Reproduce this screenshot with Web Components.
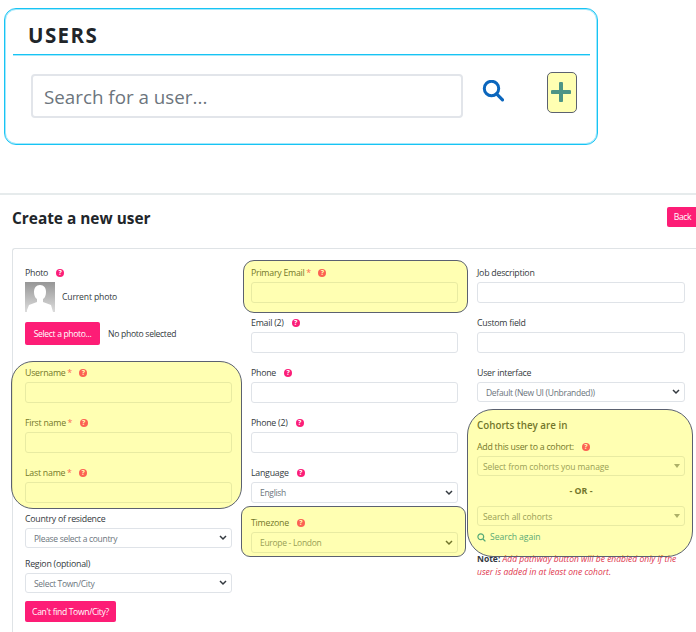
<!DOCTYPE html>
<html>
<head>
<meta charset="utf-8">
<title>Users</title>
<style>
  html, body { margin: 0; height: 632px; overflow: hidden; background: #fff; }
  body { position: relative; width: 696px; font-family: "Open Sans", sans-serif; color: #343a40; }
</style>
</head>
<body>
<users-panel></users-panel>
<create-user></create-user>

<mark-box x="547" y="72" w="30" h="41" r="5"></mark-box>
<mark-box x="243" y="260" w="225" h="53" r="11"></mark-box>
<mark-box x="11" y="361" w="231" h="148" r="22"></mark-box>
<mark-box x="241" y="506" w="225" h="51" r="9"></mark-box>
<mark-box x="467" y="409" w="226" h="148" r="26"></mark-box>

<script>
class MarkBox extends HTMLElement {
  constructor() {
    super();
    const a = (n) => this.getAttribute(n);
    this.attachShadow({ mode: 'open' }).innerHTML = `
      <style>
        :host {
          position: absolute;
          left: ${a('x')}px; top: ${a('y')}px; width: ${a('w')}px; height: ${a('h')}px;
          box-sizing: border-box;
          background: rgba(255, 255, 0, .3);
          border: 1px solid #5b6170;
          border-radius: ${a('r')}px;
          pointer-events: none;
        }
      </style>`;
  }
}

class HelpDot extends HTMLElement {
  constructor() {
    super();
    this.attachShadow({ mode: 'open' }).innerHTML = `
      <style>
        :host {
          display: inline-flex; align-items: center; justify-content: center;
          width: 8px; height: 8px; border-radius: 50%;
          background: #fb1e78; color: #fff;
          font: 700 7px/8px "Open Sans", sans-serif;
          letter-spacing: 0;
        }
      </style>?`;
  }
}

class PinkButton extends HTMLElement {
  constructor() {
    super();
    this.attachShadow({ mode: 'open' }).innerHTML = `
      <style>
        :host {
          display: inline-flex; align-items: center; justify-content: center;
          box-sizing: border-box;
          background: #fd1d76; color: #fff;
          border-radius: 2px;
          font: 400 8.6px "Open Sans", sans-serif;
          letter-spacing: -.35px;
          white-space: nowrap;
        }
      </style><slot></slot>`;
  }
}

class TextBox extends HTMLElement {
  constructor() {
    super();
    this.attachShadow({ mode: 'open' }).innerHTML = `
      <style>
        :host { display: block; }
        input {
          display: block; box-sizing: border-box; width: 100%; height: 21px;
          margin: 0; padding: 0 8px;
          background: #fff;
          border: 1px solid #dfe3e8; border-radius: 3px;
          outline: none;
        }
      </style><input type="text">`;
  }
}

class DropDown extends HTMLElement {
  constructor() {
    super();
    const isCohort = this.getAttribute('caret') === 'triangle';
    const caret = isCohort
      ? '<svg width="6" height="4" viewBox="0 0 6 4"><path d="M0 0h6L3 4z" fill="#8a8f96"/></svg>'
      : '<svg width="8" height="6" viewBox="0 0 8 6"><path d="M1 1l3 3 3-3" fill="none" stroke="#343a40" stroke-width="1.5"/></svg>';
    this.attachShadow({ mode: 'open' }).innerHTML = `
      <style>
        :host {
          display: flex; align-items: center; justify-content: space-between;
          box-sizing: border-box; height: ${this.getAttribute('h') || 20}px;
          padding: 0 3px 0 ${isCohort ? 5 : 8}px;
          background: #fff;
          border: 1px solid #dfe3e8; border-radius: 3px;
          color: #6c757d;
          font: 400 8.5px "Open Sans", sans-serif;
          letter-spacing: ${isCohort ? -0.07 : -0.3}px;
        }
        svg { flex: none; margin-right: 1px; }
      </style><slot></slot>${caret}`;
  }
}

class FormField extends HTMLElement {
  constructor() {
    super();
    const label = this.getAttribute('label');
    const star = this.hasAttribute('required') ? '<span class="star"> *</span>' : '';
    const help = this.hasAttribute('help') ? '<help-dot></help-dot>' : '';
    this.attachShadow({ mode: 'open' }).innerHTML = `
      <style>
        :host { display: block; margin-bottom: 12px; }
        :host([tight]) { margin-bottom: 8px; }
        .label {
          display: flex; align-items: center; gap: 8px;
          height: 17px; padding-bottom: 2px; box-sizing: border-box;
          font-size: 8.8px; letter-spacing: -.25px; color: #343a40; white-space: pre;
        }
        .star { color: #fb1e78; letter-spacing: -.6px; }
      </style>
      <div class="label"><span>${label}${star}</span>${help}</div>
      <slot></slot>`;
  }
}

class UsersPanel extends HTMLElement {
  constructor() {
    super();
    this.attachShadow({ mode: 'open' }).innerHTML = `
      <style>
        :host {
          display: block; box-sizing: border-box;
          width: 594px; height: 137px; margin: 8px 0 0 4px;
          padding: 0 7px 0 8px;
          border: 1px solid #17c4f4; border-radius: 12px;
          box-shadow: inset 0 0 0 1px rgba(28, 198, 244, .4);
        }
        h1 {
          margin: 0; height: 46px; padding-left: 15px; box-sizing: border-box;
          border-bottom: 1px solid #17c4f4;
          box-shadow: 0 1px 0 rgba(28, 198, 244, .4);
          font: 700 20.5px/53px "Open Sans", sans-serif;
          letter-spacing: 1.4px; color: #212529;
        }
        .row { display: flex; align-items: flex-start; padding: 19px 0 0 18px; }
        input {
          box-sizing: border-box; width: 432px; height: 44px; margin: 0;
          padding: 1px 11px 0;
          border: 2px solid #e2e5ea; border-radius: 4px;
          font: 400 18.8px "Open Sans", sans-serif;
          outline: none;
        }
        input::placeholder { color: #6c757d; opacity: 1; }
        .find { margin: 6px 0 0 19px; flex: none; }
        .add { margin: -3px 0 0 42px; flex: none; width: 30px; height: 41px; display: flex; align-items: center; justify-content: center; }
      </style>
      <h1>USERS</h1>
      <div class="row">
        <input type="text" placeholder="Search for a user...">
        <svg class="find" width="22" height="22" viewBox="0 0 22 22">
          <circle cx="9.5" cy="8.5" r="7.2" fill="none" stroke="#0b66bd" stroke-width="3"/>
          <path d="M14.6 13.8L20.5 19.8" stroke="#0b66bd" stroke-width="3.2" stroke-linecap="round"/>
        </svg>
        <div class="add">
          <svg width="20" height="20" viewBox="0 0 20 20">
            <path d="M10 1.5v17M1.5 10h17" stroke="#0066c0" stroke-width="4" stroke-linecap="round"/>
          </svg>
        </div>
      </div>`;
  }
}

class CreateUser extends HTMLElement {
  constructor() {
    super();
    this.attachShadow({ mode: 'open' }).innerHTML = `
      <style>
        :host {
          display: block; box-sizing: border-box; width: 698px;
          margin-top: 48px; padding: 0 0 0 12px;
          border-top: 2px solid #e6ebec;
        }
        header { display: flex; justify-content: space-between; align-items: flex-start; height: 53px; padding-top: 12px; box-sizing: border-box; }
        h2 { margin: 1px 0 0; font: 700 15.4px/22px "Open Sans", sans-serif; color: #212529; }
        .back { width: 31px; height: 20px; }
        .card {
          display: grid; grid-template-columns: 207px 207px 208px; column-gap: 19px;
          box-sizing: border-box; height: 400px; padding: 16px 12px 0;
          border: 1px solid #dfe3e6; border-right: none; border-radius: 3px 0 0 0;
        }
        .photo { height: 100px; }
        .photo .label { display: flex; align-items: center; gap: 8px; height: 17px; padding-bottom: 2px; box-sizing: border-box; font-size: 8.8px; letter-spacing: -.25px; }
        .now { display: flex; align-items: center; gap: 7px; font-size: 8.6px; letter-spacing: -.15px; height: 30px; }
        .now svg { display: block; }
        .pick { display: flex; align-items: center; gap: 8px; margin-top: 10px; font-size: 8.6px; letter-spacing: -.3px; }
        .pick pink-button { width: 75px; height: 23px; }
        .cant { display: flex; width: 91px; height: 21px; margin-top: 1px; }
        h3 { margin: 17px 0 6px; font: 600 9.8px/14px "Open Sans", sans-serif; color: #343a40; }
        .or { height: 30px; line-height: 30px; text-align: center; font-size: 8.8px; font-weight: 700; }
        .again { display: flex; align-items: center; gap: 4px; height: 22px; font-size: 8.6px; letter-spacing: -.05px; color: #0a84a8; }
        .note { margin: 4px 0 0; font-size: 8.5px; line-height: 13px; font-style: italic; color: #e0354b; white-space: nowrap; }
        .note div { height: 13px; }
        .note b { font-style: normal; color: #343a40; }
      </style>
      <header>
        <h2>Create a new user</h2>
        <pink-button class="back">Back</pink-button>
      </header>
      <div class="card">
        <div>
          <div class="photo">
            <div class="label"><span>Photo</span><help-dot></help-dot></div>
            <div class="now">
              <svg width="30" height="30" viewBox="0 0 30 30">
                <defs><linearGradient id="g" x1="0" y1="0" x2="0" y2="1">
                  <stop offset="0" stop-color="#969696"/><stop offset="1" stop-color="#dcdcdc"/>
                </linearGradient></defs>
                <rect width="30" height="30" fill="url(#g)"/>
                <path d="M15 3c4 0 6 3 6 7 0 3-1 6-3 7v3l8 3 2 7H2v-2l2-5 8-3v-3c-2-1-3-4-3-7 0-4 2-7 6-7z" fill="#fff"/>
              </svg>
              <span>Current photo</span>
            </div>
            <div class="pick"><pink-button>Select a photo...</pink-button><span>No photo selected</span></div>
          </div>
          <form-field label="Username" required help><text-box></text-box></form-field>
          <form-field label="First name" required help><text-box></text-box></form-field>
          <form-field label="Last name" required help tight><text-box></text-box></form-field>
          <form-field label="Country of residence" tight><drop-down>Please select a country</drop-down></form-field>
          <form-field label="Region (optional)" tight><drop-down>Select Town/City</drop-down></form-field>
          <pink-button class="cant">Can't find Town/City?</pink-button>
        </div>
        <div>
          <form-field label="Primary Email" required help><text-box></text-box></form-field>
          <form-field label="Email (2)" help><text-box></text-box></form-field>
          <form-field label="Phone" help><text-box></text-box></form-field>
          <form-field label="Phone (2)" help><text-box></text-box></form-field>
          <form-field label="Language" help><drop-down h="21">English</drop-down></form-field>
          <form-field label="Timezone" help><drop-down h="21">Europe - London</drop-down></form-field>
        </div>
        <div>
          <form-field label="Job description"><text-box></text-box></form-field>
          <form-field label="Custom field"><text-box></text-box></form-field>
          <form-field label="User interface" style="margin:0"><drop-down>Default (New UI (Unbranded))</drop-down></form-field>
          <h3>Cohorts they are in</h3>
          <form-field label="Add this user to a cohort:" help style="margin:0"><drop-down caret="triangle">Select from cohorts you manage</drop-down></form-field>
          <div class="or">- OR -</div>
          <drop-down caret="triangle">Search all cohorts</drop-down>
          <div class="again">
            <svg width="9" height="9" viewBox="0 0 9 9"><circle cx="3.8" cy="3.8" r="2.9" fill="none" stroke="#0a84a8" stroke-width="1.2"/><path d="M6 6l2.4 2.4" stroke="#0a84a8" stroke-width="1.3"/></svg>
            <span>Search again</span>
          </div>
          <div class="note">
            <div><b>Note:</b> <span>Add pathway button will be enabled only if the</span></div>
            <div>user is added in at least one cohort.</div>
          </div>
        </div>
      </div>`;
  }
}

customElements.define('mark-box', MarkBox);
customElements.define('help-dot', HelpDot);
customElements.define('pink-button', PinkButton);
customElements.define('text-box', TextBox);
customElements.define('drop-down', DropDown);
customElements.define('form-field', FormField);
customElements.define('users-panel', UsersPanel);
customElements.define('create-user', CreateUser);
</script>
</body>
</html>
